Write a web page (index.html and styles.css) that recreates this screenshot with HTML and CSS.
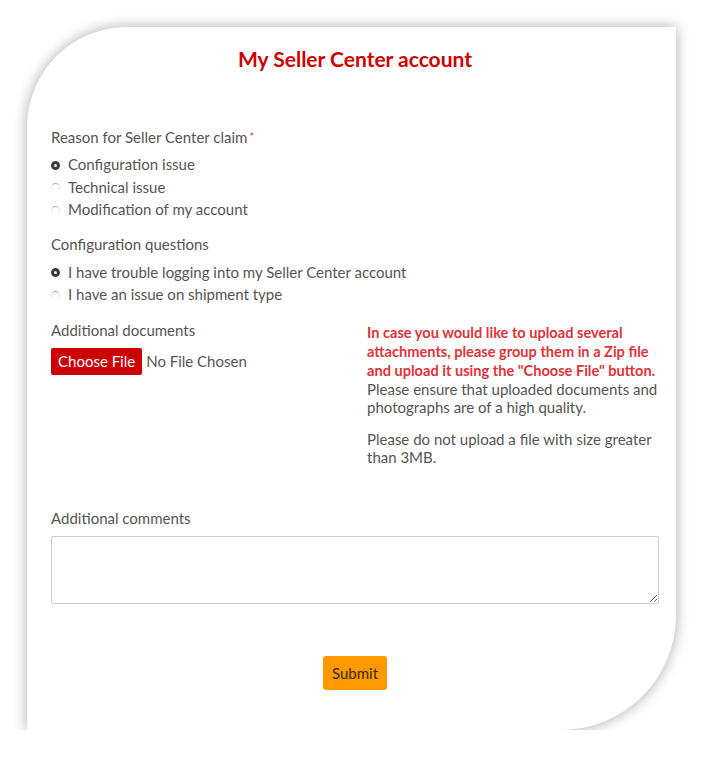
FILE: index.html
```html
<!DOCTYPE html>
<html>
<head>
<meta charset="utf-8">
<link rel="stylesheet" href="styles.css">
</head>
<body>
<div class="card">
  <h1 class="title">My Seller Center account</h1>

  <div class="field">
    <div class="label">Reason for Seller Center claim<span class="req">*</span></div>
    <div class="radios">
      <div class="radio-row"><span class="radio checked"></span>Configuration issue</div>
      <div class="radio-row"><span class="radio"></span>Technical issue</div>
      <div class="radio-row"><span class="radio"></span>Modification of my account</div>
    </div>
  </div>

  <div class="field">
    <div class="label">Configuration questions</div>
    <div class="radios second">
      <div class="radio-row"><span class="radio checked"></span>I have trouble logging into my Seller Center account</div>
      <div class="radio-row"><span class="radio"></span>I have an issue on shipment type</div>
    </div>
  </div>

  <div class="docs">
    <div class="docs-left">
      <div class="label">Additional documents</div>
      <div class="file-row">
        <span class="file-btn">Choose File</span>
        <span class="file-name">No File Chosen</span>
      </div>
    </div>
    <div class="docs-right">
      <p class="info"><strong class="warn">In case you would like to upload several attachments, please group them in a Zip file and upload it using the "Choose File" button.</strong> Please ensure that uploaded documents and photographs are of a high quality.</p>
      <p class="info">Please do not upload a file with size greater than 3MB.</p>
    </div>
  </div>

  <div class="comments">
    <div class="label">Additional comments</div>
    <textarea class="textarea"></textarea>
  </div>

  <div class="actions">
    <button class="submit">Submit</button>
  </div>
</div>
</body>
</html>
```
FILE: styles.css
```css
html, body {
  margin: 0;
  padding: 0;
  background: #ffffff;
}
body {
  font-family: Lato, "Open Sans", sans-serif;
  color: #555555;
  font-size: 15px;
}
.card {
  margin: 27px 0 0 27px;
  width: 649px;
  height: 703px;
  box-sizing: border-box;
  padding: 20px 17px 0 24px;
  background: #ffffff;
  border-radius: 100px 0 115px 0;
  box-shadow: 0 0 14px rgba(0, 0, 0, 0.33);
}
.title {
  margin: 0;
  text-align: center;
  font-size: 21px;
  line-height: 24px;
  font-weight: 700;
  color: #cc0000;
}
.field {
  margin-top: 13px;
}
.field:first-of-type {
  margin-top: 56px;
}
.label {
  line-height: 20px;
  font-size: 15px;
  color: #555;
}
.req {
  color: #e0333a;
  font-size: 11px;
  vertical-align: top;
  margin-left: 2px;
}
.radios {
  margin-top: 6px;
}
.radios.second {
  margin-top: 7px;
}
.radio-row {
  display: flex;
  align-items: center;
  line-height: 22.5px;
  font-size: 15px;
}
.radio {
  width: 9px;
  height: 9px;
  box-sizing: border-box;
  border-radius: 50%;
  margin-right: 8px;
  border: 1px solid transparent;
  border-top-color: #b0b0b0;
  border-left-color: #e2e2e2;
  border-right-color: #e2e2e2;
  flex: none;
  margin-top: 2px;
}
.radio.checked {
  border: 3.2px solid #3a3a3a;
  background: #f2f2f2;
}
.docs {
  display: flex;
  margin-top: 14px;
}
.docs-left {
  width: 316px;
  flex: none;
}
.file-row {
  display: flex;
  align-items: center;
  margin-top: 8px;
}
.file-btn {
  background: #cc0000;
  color: #fff;
  font-size: 15px;
  line-height: 27px;
  padding: 0 7px;
  border-radius: 2px;
}
.file-name {
  margin-left: 4px;
  font-size: 15px;
}
.docs-right {
  flex: 1;
  padding-top: 3px;
}
.info {
  margin: 0 0 14px 0;
  font-size: 15px;
  line-height: 18px;
  color: #555;
}
.warn {
  color: #e0333a;
  font-weight: 700;
  font-size: 14.6px;
}
.comments {
  margin-top: 28px;
}
.textarea {
  display: block;
  margin-top: 8px;
  width: 608px;
  height: 68px;
  box-sizing: border-box;
  border: 1px solid #c9ced4;
  border-radius: 2px;
  resize: vertical;
  font-family: inherit;
}
.actions {
  display: flex;
  justify-content: center;
  margin-top: 52px;
}
.submit {
  background: #ff9900;
  border: none;
  border-radius: 3px;
  color: #3a2a00;
  font-family: Lato, "Open Sans", sans-serif;
  font-size: 15px;
  width: 64px;
  height: 34px;
  padding: 0;
}
```
